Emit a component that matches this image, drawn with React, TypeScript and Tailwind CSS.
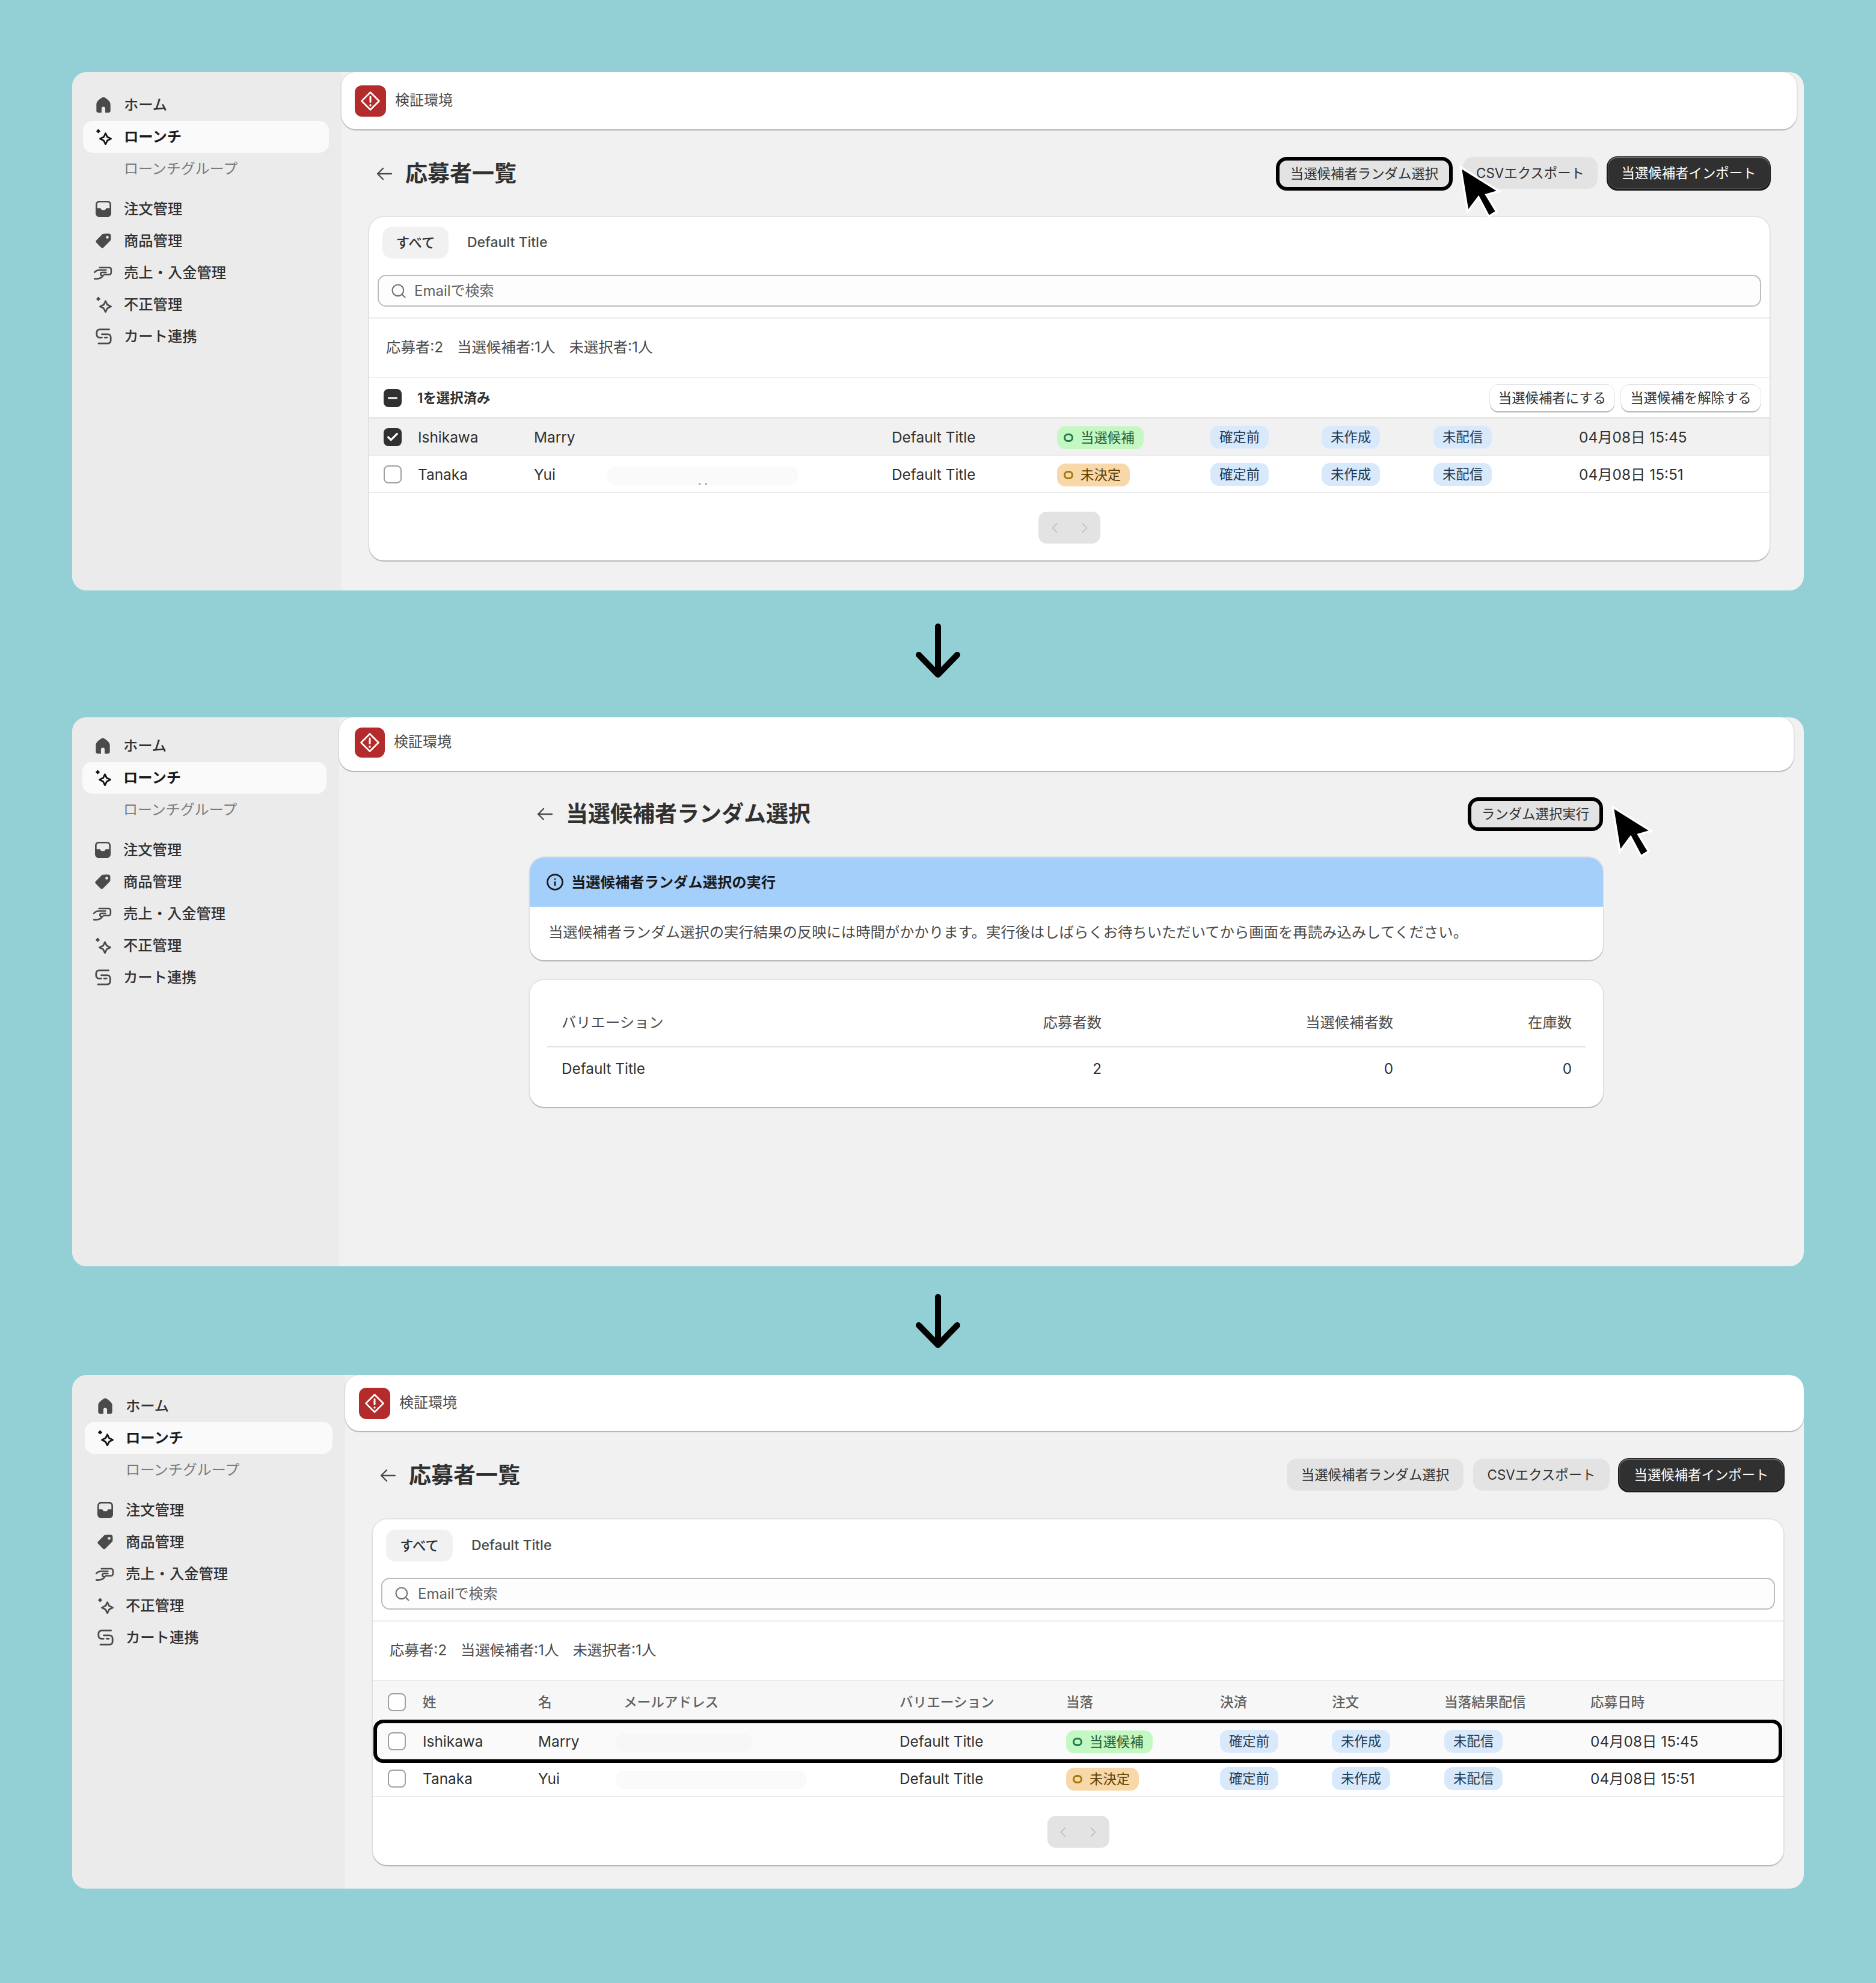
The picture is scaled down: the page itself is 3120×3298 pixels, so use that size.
import { ChevronLeft, ChevronRight, Check, Info, Minus, Search } from 'lucide-react';
import type { ReactNode } from 'react';

const cardEdge = 'shadow-[0_2px_1px_rgba(0,0,0,0.2),0_0_0_2px_rgba(0,0,0,0.05)]';

function HomeIcon() {
  return (
    <svg viewBox="1.500 1 21 22" className="w-[26px] h-[27px]" fill="currentColor">
      <path d="M12 1.500C9.600 1.500 2.500 7.200 2.500 10.500V20a2.500 2.500 0 0 0 2.500 2.500h4.500V17a2.500 2.500 0 0 1 5 0v5.500H19a2.500 2.500 0 0 0 2.500-2.500v-9.500C21.500 7.200 14.400 1.500 12 1.500Z" />
    </svg>
  );
}

function SparkIcon() {
  return (
    <svg viewBox="1 1 22 22.500" className="w-[27px] h-[27px]" fill="none" stroke="currentColor" strokeWidth="2.300" strokeLinejoin="round">
      <path d="M4.500 1.500 7.500 4.500 4.500 7.500 1.500 4.500Z" fill="currentColor" stroke="none" />
      <path d="M14.500 7.500 17 12.500 22 15 17 17.500 14.500 22.500 12 17.500 7 15 12 12.500Z" />
    </svg>
  );
}

function InboxIcon() {
  return (
    <svg viewBox="1.500 1.500 21 22" className="w-[26px] h-[27px]" fill="currentColor">
      <rect x="2.500" y="2.500" width="19" height="20" rx="4" fill="none" stroke="currentColor" strokeWidth="2.200" />
      <path d="M3 11.500h5l1.800 2.500h4.400l1.800-2.500h5V19a3 3 0 0 1-3 3H6a3 3 0 0 1-3-3Z" />
    </svg>
  );
}

function TagIcon() {
  return (
    <svg viewBox="1 1 22 22" className="w-[26px] h-[26px]" fill="currentColor" fillRule="evenodd">
      <path d="M15.500 1.500h4a3 3 0 0 1 3 3v4.500c0 1.100-.4 2-1.200 2.800l-9 9a2.600 2.600 0 0 1-3.700 0l-6.400-6.400a2.600 2.600 0 0 1 0-3.700l9-9C13.400 1.900 14.400 1.500 15.500 1.500ZM17.500 4.500a2 2 0 1 0 0 4 2 2 0 0 0 0-4Z" />
    </svg>
  );
}

function CashIcon() {
  return (
    <svg viewBox="0 0 30 24" className="w-[32px] h-[26px] -ml-[4px]" fill="none" stroke="currentColor" strokeWidth="2.400" strokeLinecap="round" strokeLinejoin="round">
      <path d="M2 11c2-2.200 4.500-3.500 7-3.500h11" />
      <path d="M10 3.500h15a3 3 0 0 1 3 3v5a3 3 0 0 1-3 3h-8" />
      <path d="M20 11h-6a2.500 2.500 0 0 0-2.500 2.500 2.500 2.500 0 0 0 2.500 2.500h1.500c-2 3-5 5-10 5H2" />
    </svg>
  );
}

function LinkIcon() {
  return (
    <svg viewBox="1 1 22 22" className="w-[27px] h-[27px]" fill="none" stroke="currentColor" strokeWidth="2.300" strokeLinecap="round" strokeLinejoin="round">
      <path d="M19.500 2.500H6.500a4 4 0 0 0-4 4v3a4 4 0 0 0 4 4h3" />
      <path d="M9.500 9H17.500a4 4 0 0 1 4 4v4.500a4 4 0 0 1-4 4H5" />
      <path d="M13.500 13.500h3" />
    </svg>
  );
}

function NavRow({ icon, label, active = false }: { icon?: ReactNode; label: string; active?: boolean }) {
  return (
    <div
      className={
        active
          ? 'flex items-center h-[53px] rounded-[16px] bg-[#fafafa] text-[#1a1a1a] font-semibold text-[24.3px]'
          : 'flex items-center h-[53px] text-[#303030] text-[24.3px] font-medium'
      }
    >
      <span className={active ? 'w-[68px] pl-[21px] text-[#111111] flex' : 'w-[68px] pl-[21px] text-[#4a4a4a] flex'}>{icon}</span>
      {label}
    </div>
  );
}

function Sidebar({ box }: { box: string }) {
  return (
    <aside className={box}>
      <NavRow icon={<HomeIcon />} label="ホーム" />
      <NavRow icon={<SparkIcon />} label="ローンチ" active />
      <div className="flex items-center h-[53px] pl-[68px] text-[24px] text-[#7a7a7a] mb-[14px]">ローンチグループ</div>
      <NavRow icon={<InboxIcon />} label="注文管理" />
      <NavRow icon={<TagIcon />} label="商品管理" />
      <NavRow icon={<CashIcon />} label="売上・入金管理" />
      <NavRow icon={<SparkIcon />} label="不正管理" />
      <NavRow icon={<LinkIcon />} label="カート連携" />
    </aside>
  );
}

function TopBar({ box, logo = 'w-[52px] h-[52px]' }: { box: string; logo?: string }) {
  return (
    <header className={box}>
      <div className={`${logo} rounded-[12px] bg-[#b42b2b] flex items-center justify-center shrink-0`}>
        <svg viewBox="0 0 40 40" className="w-[40px] h-[40px]" fill="none" stroke="#ffffff" strokeWidth="2.600" strokeLinecap="round" strokeLinejoin="round">
          <path d="M20 5.500 34.500 20 20 34.500 5.500 20Z" />
          <path d="M20 13v8.500" strokeWidth="3" />
          <circle cx="20" cy="27" r="1.700" fill="#ffffff" stroke="none" />
        </svg>
      </div>
      <span className="ml-[15px] text-[24px] text-[#4a4a4a] -mt-[1px]">検証環境</span>
    </header>
  );
}

function BackArrow() {
  return (
    <svg viewBox="0 0 26 24" className="w-[26px] h-[24px] shrink-0" fill="none" stroke="#4a4a4a" strokeWidth="2.400" strokeLinecap="round" strokeLinejoin="round">
      <path d="M25 12H2M11 3l-9 9 9 9" />
    </svg>
  );
}

function PageTitle({ children }: { children: ReactNode }) {
  return (
    <div className="flex items-center h-[55px] pl-[12px] gap-[22px]">
      <BackArrow />
      <h1 className="text-[37px] font-bold text-[#303030]">{children}</h1>
    </div>
  );
}

function GrayButton({ box, outlined = false, children }: { box: string; outlined?: boolean; children: ReactNode }) {
  return (
    <button
      className={
        outlined
          ? `${box} h-[56px] rounded-[18px] border-[6px] border-black bg-[#e3e3e3] text-[22.400px] font-normal text-[#303030] flex items-center justify-center`
          : `${box} h-[53px] rounded-[16px] bg-[#e3e3e3] text-[22.400px] font-normal text-[#303030] flex items-center justify-center`
      }
    >
      {children}
    </button>
  );
}

function DarkButton({ box, children }: { box: string; children: ReactNode }) {
  return (
    <button className={`${box} h-[53px] rounded-[16px] bg-[#303030] text-white text-[22.400px] font-normal flex items-center justify-center shadow-[inset_0_2px_0_rgba(255,255,255,0.25),inset_0_0_0_1px_rgba(255,255,255,0.12),0_1px_0_2px_#1a1a1a]`}>
      {children}
    </button>
  );
}

function Cursor({ box }: { box: string }) {
  return (
    <svg viewBox="-4 -4 72 94" className={box} fill="#000000" stroke="#ffffff" strokeWidth="3.500" strokeLinejoin="miter">
      <path d="M0 0 12 74 30 50 47 82 60 74 43 46 64 40Z" />
    </svg>
  );
}

function SmallButton({ box, children }: { box: string; children: ReactNode }) {
  return (
    <button className={`${box} h-[44px] rounded-[14px] bg-white text-[22.400px] font-normal text-[#303030] shadow-[0_2px_0_#b5b5b5,0_0_0_1px_#e3e3e3]`}>
      {children}
    </button>
  );
}

function Box({ state }: { state: 'off' | 'on' | 'mixed' }) {
  if (state === 'off') {
    return <span className="w-[30px] h-[30px] rounded-[8px] border-2 border-[#a0a0a0] bg-white block" />;
  }
  return (
    <span className="w-[30px] h-[30px] rounded-[8px] bg-[#303030] flex items-center justify-center text-white">
      {state === 'on' ? <Check size={22} strokeWidth={3.500} /> : <Minus size={22} strokeWidth={3.500} />}
    </span>
  );
}

function Badge({ tone, children }: { tone: 'blue' | 'green' | 'orange'; children: ReactNode }) {
  if (tone === 'blue') {
    return <span className="inline-flex items-center justify-center h-[38px] w-[97px] rounded-[14px] bg-[#d9e9fc] text-[22.400px] text-[#1f3a52]">{children}</span>;
  }
  const wrap = tone === 'green' ? 'bg-[#c4f8c2] text-[#1e5b3a]' : 'bg-[#f8d7a8] text-[#5e4200]';
  const ring = tone === 'green' ? 'border-[#1e7a4c]' : 'border-[#a1770f]';
  return (
    <span className={`inline-flex items-center h-[38px] rounded-[14px] pl-[11px] pr-[15px] gap-[12px] text-[22.400px] ${wrap}`}>
      <span className={`w-[16px] h-[14px] rounded-full border-[3px] ${ring}`} />
      {children}
    </span>
  );
}

function Pager() {
  return (
    <div className="mx-auto w-[103px] h-[53px] rounded-[14px] bg-[#e3e3e3] text-[#bcbcbc] flex items-center justify-center gap-[22px]">
      <ChevronLeft size={28} strokeWidth={1.500} />
      <ChevronRight size={28} strokeWidth={1.500} />
    </div>
  );
}

function FilterArea({ tabPad, pill }: { tabPad: string; pill: string }) {
  return (
    <>
      <div className={`flex items-center ${tabPad}`}>
        <span className={`${pill} h-[53px] rounded-[16px] bg-[#f1f1f1] flex items-center justify-center text-[22.400px] font-medium text-[#303030]`}>すべて</span>
        <span className="ml-[31px] text-[23px] font-medium text-[#4a4a4a]">Default Title</span>
      </div>
      <div className="mx-[14px] mt-[27px] h-[53px] rounded-[14px] border-2 border-[#bdbdbd] bg-[#fdfdfd] flex items-center pl-[19px] gap-[12px] text-[24px] text-[#616161]">
        <Search size={28} strokeWidth={1.800} className="text-[#707070]" />
        Emailで検索
      </div>
      <div className="h-[100px] mt-[17px] pb-[3px] border-t-[3px] border-[#f0f0f0] flex items-center pl-[28px] gap-[23px] text-[24.400px] text-[#4a4a4a]">
        <span>応募者:2</span>
        <span>当選候補者:1人</span>
        <span>未選択者:1人</span>
      </div>
    </>
  );
}

function Row({
  grid,
  bg,
  first,
  last,
  date,
  tone,
  toneLabel,
  box,
  pill,
  dots = false,
}: {
  grid: string;
  bg: string;
  first: string;
  last: string;
  date: string;
  tone: 'green' | 'orange';
  toneLabel: string;
  box: 'on' | 'off';
  pill?: string;
  dots?: boolean;
}) {
  return (
    <div className={`${grid} ${bg} h-[62px] pt-[2px] items-center border-b-2 border-[#ebebeb] text-[24.400px] text-[#303030]`}>
      <Box state={box} />
      <span>{first}</span>
      <span>{last}</span>
      <span>
        {pill && (
          <span className={`${pill} flex items-end justify-center gap-[8px] h-[30px] mt-[3px] rounded-[12px]`}>
            {dots && <span className="w-[3px] h-[2px] bg-[#8a8a8a]" />}
            {dots && <span className="w-[3px] h-[2px] bg-[#8a8a8a]" />}
          </span>
        )}
      </span>
      <span>Default Title</span>
      <span><Badge tone={tone}>{toneLabel}</Badge></span>
      <span><Badge tone="blue">確定前</Badge></span>
      <span><Badge tone="blue">未作成</Badge></span>
      <span><Badge tone="blue">未配信</Badge></span>
      <span>{date}</span>
    </div>
  );
}

function FirstPanel() {
  const grid = 'grid pl-[24px] grid-cols-[57px_193px_122px_473px_275px_255px_185px_186px_242px_1fr]';
  return (
    <section className="relative flex h-[862px] rounded-[24px] overflow-hidden bg-[#f1f1f1]">
      <Sidebar box="w-[448px] shrink-0 bg-[#ebebeb] pt-[28px] pl-[18px] pr-[21px]" />
      <div className="flex-1 min-w-0">
        <TopBar box={`h-[95px] mr-[12px] bg-white rounded-[24px] flex items-center pl-[22px] ${cardEdge}`} />
        <div className="pl-[46px] pr-[57px] pt-[46px]">
          <div className="flex items-start h-[56px]">
            <PageTitle>応募者一覧</PageTitle>
            <div className="ml-auto flex items-start gap-[17px]">
              <GrayButton box="w-[294px]" outlined>当選候補者ランダム選択</GrayButton>
              <GrayButton box="w-[224px]">CSVエクスポート</GrayButton>
              <DarkButton box="w-[269px]">当選候補者インポート</DarkButton>
            </div>
          </div>
          <div className={`mt-[44px] h-[571px] bg-white rounded-[24px] overflow-hidden ${cardEdge}`}>
            <FilterArea tabPad="pt-[16px] pl-[22px]" pill="w-[110px]" />
            <div className="h-[69px] border-t-2 border-[#f0f0f0] flex items-center pl-[24px] pr-[15px] border-b-2 border-b-[#e3e3e3]">
              <Box state="mixed" />
              <span className="ml-[26px] text-[22.400px] font-semibold text-[#303030]">1を選択済み</span>
              <div className="ml-auto flex gap-[11px]">
                <SmallButton box="w-[207px]">当選候補者にする</SmallButton>
                <SmallButton box="w-[232px]">当選候補を解除する</SmallButton>
              </div>
            </div>
            <Row grid={grid} bg="bg-[#f1f1f1]" first="Ishikawa" last="Marry" date="04月08日 15:45" tone="green" toneLabel="当選候補" box="on" />
            <Row grid={grid} bg="bg-white" first="Tanaka" last="Yui" date="04月08日 15:51" tone="orange" toneLabel="未決定" box="off" pill="w-[317px] bg-[#fafafa]" dots />
            <div className="pt-[31px]"><Pager /></div>
          </div>
        </div>
      </div>
      <Cursor box="absolute left-[2305px] top-[154px] w-[72px] h-[94px]" />
    </section>
  );
}

function SecondPanel() {
  const grid = 'grid grid-cols-[500px_398px_485px_297px] text-[24.300px]';
  return (
    <section className="relative flex h-[913px] rounded-[24px] overflow-hidden bg-[#f1f1f1]">
      <Sidebar box="w-[444px] shrink-0 bg-[#ebebeb] pt-[21px] pl-[17px] pr-[21px]" />
      <div className="flex-1 min-w-0">
        <TopBar logo="w-[50px] h-[50px]" box={`h-[89px] mr-[17px] bg-white rounded-[24px] flex items-center pl-[26px] pb-[6px] ${cardEdge}`} />
        <div className="pr-[17px] pt-[44px]">
          <div className="w-[1785px] mx-auto">
            <div className="flex items-start h-[56px]">
              <PageTitle>当選候補者ランダム選択</PageTitle>
              <GrayButton box="ml-auto w-[225px]" outlined>ランダム選択実行</GrayButton>
            </div>
            <div className={`mt-[44px] h-[171px] bg-white rounded-[24px] overflow-hidden ${cardEdge}`}>
              <div className="h-[82px] bg-[#a4cffb] flex items-center pl-[27px] gap-[12px] text-[24.300px] font-semibold text-[#1a1a1a]">
                <Info size={30} strokeWidth={2.200} />
                当選候補者ランダム選択の実行
              </div>
              <p className="pt-[24px] pl-[31px] text-[24.350px] text-[#4a4a4a]">
                当選候補者ランダム選択の実行結果の反映には時間がかかります。実行後はしばらくお待ちいただいてから画面を再読み込みしてください。
              </p>
            </div>
            <div className={`mt-[33px] h-[211px] bg-white rounded-[24px] px-[29px] ${cardEdge}`}>
              <div className={`${grid} h-[112px] pl-[24px] pt-[52px] border-b-2 border-[#e3e3e3] text-[#4a4a4a]`}>
                <span>バリエーション</span>
                <span className="text-right">応募者数</span>
                <span className="text-right">当選候補者数</span>
                <span className="text-right">在庫数</span>
              </div>
              <div className={`${grid} h-[70px] pl-[24px] items-center text-[#303030]`}>
                <span>Default Title</span>
                <span className="text-right">2</span>
                <span className="text-right">0</span>
                <span className="text-right">0</span>
              </div>
            </div>
          </div>
        </div>
      </div>
      <Cursor box="absolute left-[2558px] top-[145px] w-[72px] h-[94px]" />
    </section>
  );
}

function ThirdPanel() {
  const grid = 'grid pl-[25px] grid-cols-[58px_192px_130px_471px_277px_256px_186px_187px_243px_1fr]';
  return (
    <section className="relative flex h-[854px] rounded-[24px] overflow-hidden bg-[#f1f1f1]">
      <Sidebar box="w-[454px] shrink-0 bg-[#ebebeb] pt-[25px] pl-[21px] pr-[21px]" />
      <div className="flex-1 min-w-0">
        <TopBar box={`h-[93px] bg-white rounded-[24px] flex items-center pl-[23px] ${cardEdge}`} />
        <div className="pl-[46px] pr-[34px] pt-[46px]">
          <div className="flex items-start h-[56px]">
            <PageTitle>応募者一覧</PageTitle>
            <div className="ml-auto flex items-start gap-[16px]">
              <GrayButton box="w-[294px]">当選候補者ランダム選択</GrayButton>
              <GrayButton box="w-[227px]">CSVエクスポート</GrayButton>
              <DarkButton box="w-[273px]">当選候補者インポート</DarkButton>
            </div>
          </div>
          <div className={`relative mt-[45px] h-[575px] bg-white rounded-[24px] ${cardEdge}`}>
            <FilterArea tabPad="pt-[17px] pl-[22px]" pill="w-[111px]" />
            <div className={`${grid} h-[71px] items-center bg-[#f7f7f7] border-t-2 border-[#ebebeb] text-[22.600px] font-medium text-[#616161]`}>
              <Box state="off" />
              <span>姓</span>
              <span>名</span>
              <span className="pl-[12px]">メールアドレス</span>
              <span>バリエーション</span>
              <span>当落</span>
              <span>決済</span>
              <span>注文</span>
              <span>当落結果配信</span>
              <span>応募日時</span>
            </div>
            <Row grid={grid} bg="bg-[#fafafa]" first="Ishikawa" last="Marry" date="04月08日 15:45" tone="green" toneLabel="当選候補" box="off" pill="w-[225px] bg-[#f7f7f7]" />
            <Row grid={grid} bg="bg-white" first="Tanaka" last="Yui" date="04月08日 15:51" tone="orange" toneLabel="未決定" box="off" pill="w-[316px] bg-[#fafafa]" />
            <div className="pt-[31px]"><Pager /></div>
            <div className="absolute left-[1px] right-[2px] top-[333px] h-[72px] rounded-[16px] border-[6px] border-black" />
          </div>
        </div>
      </div>
    </section>
  );
}

function DownArrow({ box }: { box: string }) {
  return (
    <div className={box}>
      <svg viewBox="0 0 74 90" className="w-[74px] h-[90px] mx-auto" fill="none" stroke="#000000" strokeWidth="10" strokeLinecap="round" strokeLinejoin="round">
        <path d="M37 5V84M5 52l32 33 32-33" />
      </svg>
    </div>
  );
}

export default function App() {
  return (
    <div className="h-[3298px] bg-[#93d0d5] pt-[120px] px-[120px] font-['Inter','Noto_Sans_CJK_JP',sans-serif]">
      <FirstPanel />
      <DownArrow box="h-[211px] pt-[55px]" />
      <SecondPanel />
      <DownArrow box="h-[181px] pt-[46px]" />
      <ThirdPanel />
    </div>
  );
}
